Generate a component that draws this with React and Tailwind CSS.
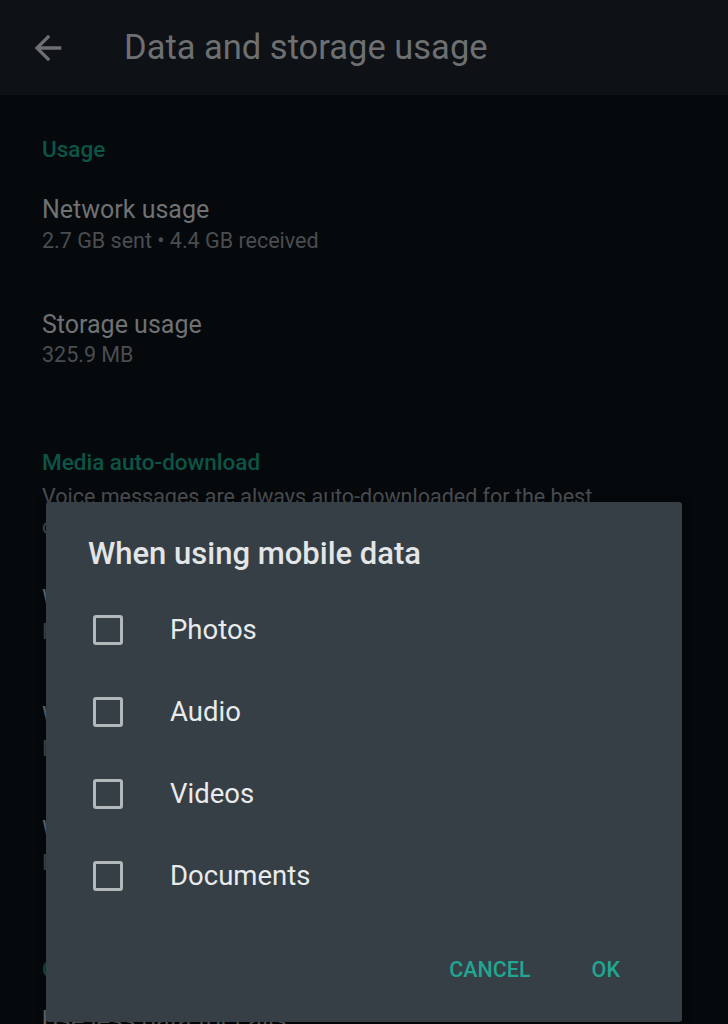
const rows = [
    { title: 'When using mobile data', value: 'No media', mt: 'mt-[43px]' },
    { title: 'When connected on Wi-Fi', value: 'No media', mt: 'mt-[55px]' },
    { title: 'When roaming', value: 'No media', mt: 'mt-[52px]' },
];

const options = ['Photos', 'Audio', 'Videos', 'Documents'];

function BackArrow() {
    return (
        <svg width="40" height="40" viewBox="0 0 24 24" fill="#6d6f71">
            <path d="M20 11H7.83l5.59-5.59L12 4l-8 8 8 8 1.41-1.41L7.83 13H20v-2z" />
        </svg>
    );
}

function Dialog() {
    return (
        <div className="absolute left-[46px] top-[502px] w-[636px] h-[520px] rounded-[3px] bg-[#363f45] shadow-[0_2px_10px_rgba(0,0,0,0.5)]">
            <div className="pl-[42px] pt-[34px] text-[31px] leading-[36px] font-medium text-[#e3e5e6]">
                When using mobile data
            </div>
            <div className="mt-[17px]">
                {options.map((label) => (
                    <div key={label} className="flex h-[82px] items-center pl-[47px]">
                        <span className="h-[30px] w-[30px] rounded-[3px] border-[3px] border-[#b3b8bb]" />
                        <span className="ml-[47px] text-[27.5px] text-[#e8eaeb]">{label}</span>
                    </div>
                ))}
            </div>
            <div className="mt-[38px] flex justify-end gap-[61px] pr-[62px] text-[21.5px] leading-[30px] font-medium text-[#21a691]">
                <button type="button">CANCEL</button>
                <button type="button">OK</button>
            </div>
        </div>
    );
}

export default function App() {
    return (
        <div className="relative h-[1024px] w-[728px] overflow-hidden bg-[#05090c] font-['Roboto',sans-serif]">
            {/* Header */}
            <header className="flex h-[95px] items-center bg-[#0e1115]">
                <div className="ml-[28px] flex h-[40px] w-[40px] items-center">
                    <BackArrow />
                </div>
                <h1 className="ml-[56px] text-[34.5px] text-[#6d6f71]">Data and storage usage</h1>
            </header>

            {/* Settings list (dimmed behind dialog) */}
            <div className="pl-[42px]">
                <div className="mt-[39px] text-[22.5px] leading-[30px] font-medium text-[#0d5446]">Usage</div>

                <div className="mt-[31px] text-[25px] leading-[30px] text-[#6f7173]">Network usage</div>
                <div className="mt-px text-[21.5px] leading-[30px] text-[#4a4d50]">2.7 GB sent • 4.4 GB received</div>

                <div className="mt-[54px] text-[25px] leading-[30px] text-[#6f7173]">Storage usage</div>
                <div className="text-[21.5px] leading-[30px] text-[#4a4d50]">325.9 MB</div>

                <div className="mt-[77px] text-[22.5px] leading-[30px] font-medium text-[#0d5446]">Media auto-download</div>
                <div className="mt-[5px] max-w-[560px] text-[21.5px] leading-[30px] text-[#4a4d50]">
                    Voice messages are always auto-downloaded for the best communication experience
                </div>

                {rows.map((row) => (
                    <div key={row.title} className={row.mt}>
                        <div className="text-[25px] leading-[30px] text-[#6f7173]">{row.title}</div>
                        <div className="mt-[2px] text-[21.5px] leading-[30px] text-[#4a4d50]">{row.value}</div>
                    </div>
                ))}

                <div className="mt-[76px] text-[22.5px] leading-[30px] font-medium text-[#0d5446]">Call settings</div>
                <div className="mt-[22px] text-[25px] leading-[30px] text-[#6f7173]">Use less data for calls</div>
            </div>

            <Dialog />
        </div>
    );
}
